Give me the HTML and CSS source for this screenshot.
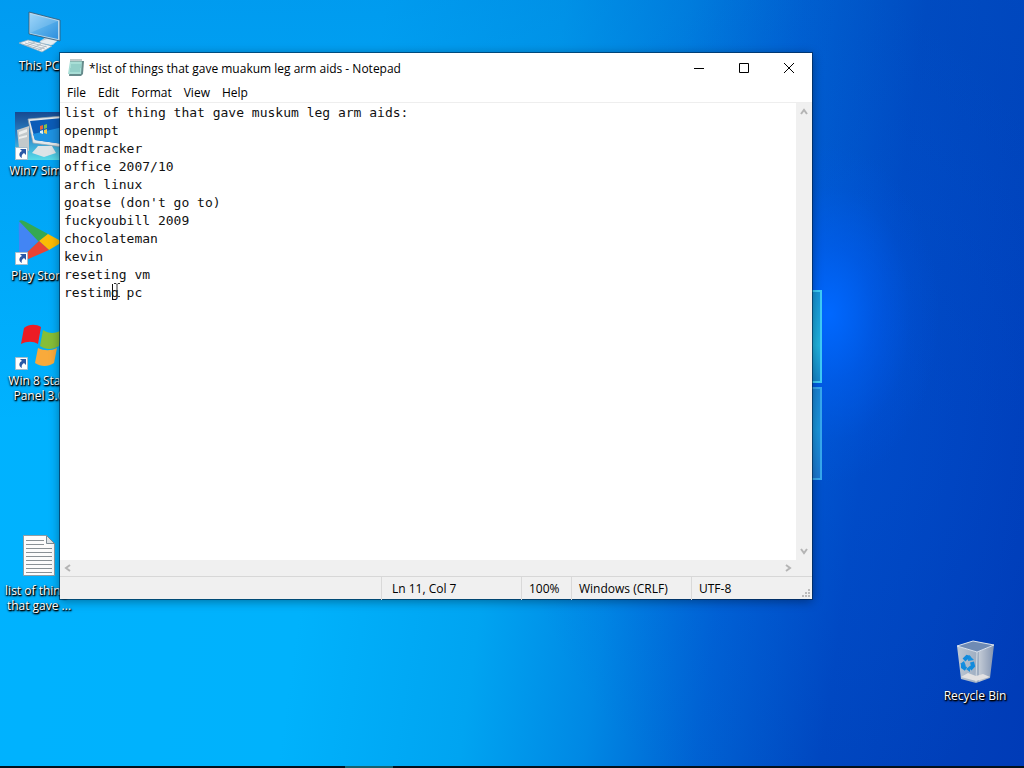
FILE: index.html
```html
<!DOCTYPE html>
<html lang="en">
<head>
<meta charset="utf-8">
<title>Desktop</title>
<link rel="stylesheet" href="styles.css">
</head>
<body>
<main class="desktop">
  <div class="logo-panes" aria-hidden="true"><span class="pane"></span><span class="pane pane-low"></span></div>

  <nav class="shortcuts" aria-label="Desktop icons">
    <a class="shortcut" href="#pc">
      <svg class="art" viewBox="0 0 48 48" aria-hidden="true">
        <defs><linearGradient id="screen" x1="0" y1="0" x2="1" y2="1"><stop offset="0" stop-color="#8ccdf8"/><stop offset=".5" stop-color="#56aeea"/><stop offset="1" stop-color="#2f8fdd"/></linearGradient></defs>
        <path d="M25 34l6-4 12 3-5 5-12-1z" fill="#b8cbd8"/><path d="M24 35l8-3 10 2-6 4z" fill="#e4edf2"/>
        <path d="M14 5l31 8v21l-31-7z" fill="#b8d8ee" stroke="#35556f" stroke-width=".8"/><path d="M15 7l28 7v18l-28-6z" fill="url(#screen)"/><path d="M15 7l28 7-28 12z" fill="#fff" opacity=".15"/>
        <path d="M4 36l9-3 24 6-10 6z" fill="#f1f4f6" stroke="#93a9b8" stroke-width=".7"/><path d="M7 37l20 6M10 36l20 6M13 35l19 5M12 39l8-4M18 41l8-4M23 43l8-4" stroke="#a5b4be" stroke-width=".8" fill="none"/>
      </svg>
      <span class="name">This PC</span>
    </a>
    <a class="shortcut" href="#win7">
      <svg class="art" viewBox="0 0 48 48" aria-hidden="true">
        <defs><linearGradient id="sky" x1="0" y1="0" x2="0" y2="1"><stop offset="0" stop-color="#164990"/><stop offset=".55" stop-color="#2f8dce"/><stop offset="1" stop-color="#58dbe8"/></linearGradient></defs>
        <path d="M0 0h48v48H0z" fill="url(#sky)"/>
        <path d="M2 18l12-4v25l-10-3z" fill="#c3c9cb"/><path d="M4 20l8-3v3l-8 3zm0 5l8-2v2l-8 2z" fill="#eceeee"/>
        <path d="M23 34h14l4 7-12 4-12-4z" fill="#dde4e7"/><path d="M13 7l35-3v31l-30-4z" fill="#e4e8ea" stroke="#97a5ae" stroke-width=".7"/><path d="M15 9l33-3v26l-28-4z" fill="#0b5cb8"/><path d="M18 22l30-7v17l-28-4z" fill="#1e92e2"/>
        <path d="M25 14l3-1v4l-3 1z" fill="#ea663e"/><path d="M29 13l3-1v4l-3 1z" fill="#7cc152"/><path d="M25 19l3-1v4l-3-1z" fill="#d8edf8"/><path d="M29 18l3-1v5l-3-1z" fill="#f3c84b"/>
        <g transform="translate(0 35)"><path d="M.5.5h12v12H.5z" fill="#fff" stroke="#a8bdcc"/><path d="M5 2h6v6L9 6c-2 1-3 3-2 5-4-2-3-6 0-7z" fill="#2b58a5"/></g>
      </svg>
      <span class="name">Win7 Simu</span>
    </a>
    <a class="shortcut" href="#play">
      <svg class="art" viewBox="0 0 48 48" aria-hidden="true">
        <path d="M5 5c-2 1-1 4-1 19s0 17 1 18l19-19z" fill="#4285f4"/><path d="M4 4c2-2 5 0 7 1l22 12-9 8z" fill="#34a853"/><path d="M33 17l11 6c2 1 2 3 0 4l-10 6-10-9z" fill="#fbbc04"/><path d="M24 24l10 9-23 10c-3 1-5 1-6-1z" fill="#ea4335"/>
        <g transform="translate(0 35)"><path d="M.5.5h12v12H.5z" fill="#fff" stroke="#a8bdcc"/><path d="M5 2h6v6L9 6c-2 1-3 3-2 5-4-2-3-6 0-7z" fill="#2b58a5"/></g>
      </svg>
      <span class="name">Play Store</span>
    </a>
    <a class="shortcut" href="#win8">
      <svg class="art" viewBox="0 0 48 48" aria-hidden="true">
        <path d="M9 6c5-4 12-4 17-1l-3 17c-5-3-11-3-17 0z" fill="#ed1c24"/><path d="M28 8c6 4 12 4 19 0l-3 16c-7 4-13 4-19 0z" fill="#86be38"/><path d="M23 26c6 3 13 3 19 0l-3 15c-6 4-13 4-19 0z" fill="#f9aa3b"/>
        <g transform="translate(0 35)"><path d="M.5.5h12v12H.5z" fill="#fff" stroke="#a8bdcc"/><path d="M5 2h6v6L9 6c-2 1-3 3-2 5-4-2-3-6 0-7z" fill="#2b58a5"/></g>
      </svg>
      <span class="name">Win 8 Start Panel 3.0</span>
    </a>
    <a class="shortcut document" href="#list">
      <svg class="art" viewBox="0 0 48 48" aria-hidden="true">
        <path d="M8.500 3.500h23l8 8v32h-31z" fill="#fcfcfc" stroke="#8f9da5"/><path d="M31.500 3.500v8h8z" fill="#dde3e7" stroke="#7f8b93"/><path d="M11 8.500h18M11 12.500h18M11 16.500h26M11 20.500h26M11 24.500h26M11 28.500h26M11 32.500h26M11 36.500h26M11 40.500h26" stroke="#8a9196"/>
      </svg>
      <span class="name">list of things that gave ...</span>
    </a>
  </nav>

  <nav class="shortcuts system" aria-label="System icons">
    <a class="shortcut bin" href="#bin">
      <svg class="art" viewBox="0 0 48 48" aria-hidden="true">
        <defs><linearGradient id="glass" x1="0" y1="0" x2="1" y2="0"><stop offset="0" stop-color="#bcc7d3"/><stop offset=".58" stop-color="#9cacc1"/><stop offset=".6" stop-color="#c2cad5"/><stop offset="1" stop-color="#8495b1"/></linearGradient></defs>
        <path d="M6 9l20 6 17-7-4 33-14 5-15-4z" fill="url(#glass)"/><path d="M6 9l16-5 21 4-17 7z" fill="#6f8bb4" stroke="#dde4ec"/><path d="M26 15l-1 30" stroke="#dee4ea" stroke-width=".8"/><path d="M10 40l15 4 14-4-7-3-7 2-8-3z" fill="#e2e1e2"/>
        <g fill="none" stroke="#118bdd" stroke-width="4"><path d="M13 23l3-3 3 1M21 25l1 4-3 3M15 32l-3-2v-3"/></g><path d="M18 18l5 5-6 1zM19 29v6l-4-3zM9 27l4-3 2 5z" fill="#168fe0"/>
      </svg>
      <span class="name">Recycle Bin</span>
    </a>
  </nav>

  <section class="window" aria-label="Notepad">
    <header class="titlebar">
      <svg class="app-icon" viewBox="0 0 16 18" aria-hidden="true"><path d="M3 2h13l-1 13-2 2H1z" fill="#668b8c"/><path d="M2 2h12l-1 13H0z" fill="#a8ded6"/><path d="M3 6h10M3 8h10M2 10h10M2 12h10" stroke="#73b9b4" stroke-width=".8"/><path d="M3 0v3M5 0v3M7 0v3M9 0v3M11 0v3M13 0v3" stroke="#617c7c" stroke-width=".8"/></svg>
      <h1 class="title">*list of things that gave muakum leg arm aids - Notepad</h1>
      <div class="controls">
        <button class="control" aria-label="Minimize"><svg viewBox="0 0 12 12"><path d="M1 6.500h10"/></svg></button>
        <button class="control" aria-label="Maximize"><svg viewBox="0 0 12 12"><path d="M1.500 1.500h9v9h-9z"/></svg></button>
        <button class="control" aria-label="Close"><svg viewBox="0 0 12 12"><path d="M1 1l10 10M11 1L1 11"/></svg></button>
      </div>
    </header>
    <div class="menus">
      <button class="menu">File</button><button class="menu">Edit</button><button class="menu">Format</button><button class="menu">View</button><button class="menu">Help</button>
    </div>
    <div class="editor">
      <textarea class="text" aria-label="Text editor" spellcheck="false" wrap="off">list of thing that gave muskum leg arm aids:
openmpt
madtracker
office 2007/10
arch linux
goatse (don't go to)
fuckyoubill 2009
chocolateman
kevin
reseting vm
restimg pc</textarea>
      <div class="bar vertical">
        <button class="arrow" aria-label="Scroll up"><svg viewBox="0 0 8 8"><path d="M1 6l3-4 3 4"/></svg></button>
        <button class="arrow" aria-label="Scroll down"><svg viewBox="0 0 8 8"><path d="M1 2l3 4 3-4"/></svg></button>
      </div>
      <div class="bar horizontal">
        <button class="arrow" aria-label="Scroll left"><svg viewBox="0 0 8 8"><path d="M6 1L2 4l4 3"/></svg></button>
        <button class="arrow" aria-label="Scroll right"><svg viewBox="0 0 8 8"><path d="M2 1l4 3-4 3"/></svg></button>
      </div>
      <svg class="pointer" viewBox="0 0 9 18" aria-hidden="true"><path d="M.500 1v16" stroke="#111"/><path d="M2 .5h2l1 1 1-1h2M5 1.500v11M2 13.500h2l1-1 1 1h2" stroke="#333" fill="none"/></svg>
    </div>
    <footer class="status">
      <span class="cell"></span><span class="cell position">Ln 11, Col 7</span><span class="cell">100%</span><span class="cell">Windows (CRLF)</span><span class="cell">UTF-8</span>
      <svg class="grip" viewBox="0 0 10 10" aria-hidden="true"><path d="M7 0h2v2H7zM4 3h2v2H4zM7 3h2v2H7zM1 6h2v2H1zM4 6h2v2H4zM7 6h2v2H7z" fill="#bcbcbc"/></svg>
    </footer>
  </section>
</main>
<div class="taskbar" aria-hidden="true"><span class="running"></span></div>
</body>
</html>
```

FILE: styles.css
```css
* { box-sizing: border-box; }

body {
  margin: 0;
  height: 100vh;
  display: flex;
  flex-direction: column;
  overflow: hidden;
  font: 12px/15px "Open Sans", "Noto Sans", sans-serif;
  color: #000;
}

button {
  margin: 0;
  padding: 0;
  border: 0;
  background: none;
  font: inherit;
  color: inherit;
}

svg { display: block; }

.desktop {
  position: relative;
  flex: 1;
  min-height: 0;
  display: flex;
  justify-content: space-between;
  padding-right: 10px;
  background:
    radial-gradient(ellipse 110px 170px at 81% 41%, #0068ff 0%, rgba(0, 98, 250, .5) 40%, rgba(0, 92, 235, .15) 75%, transparent 100%),
    radial-gradient(ellipse 300px 420px at 78% 52%, rgba(0, 88, 225, .4), transparent),
    linear-gradient(to bottom, rgba(0, 90, 200, .26), transparent 55%),
    linear-gradient(98deg, #00b2ff 0%, #00b2fc 34%, #00a4f1 50%, #0088e4 61%, #0062d2 71%, #0046be 82%, #003bb7 100%);
}

.logo-panes {
  position: absolute;
  left: 700px;
  top: 290px;
  width: 122px;
  height: 190px;
  display: grid;
  grid-template-rows: 1fr 1fr;
  gap: 4px;
}

.pane {
  border: 2px solid #3ecdf8;
  background: linear-gradient(#1795d8, #20b3df 60%, #1688cc);
}

.pane-low {
  border-color: #36a9ef;
  background: linear-gradient(#1b85d6, #1a96dc 45%, #1c78d2);
}

.shortcuts {
  display: grid;
  grid-template-columns: 78px;
  grid-template-rows: repeat(7, 105px);
}

.shortcut {
  display: flex;
  flex-direction: column;
  align-items: center;
  padding-top: 7px;
  color: #fff;
  text-align: center;
  text-decoration: none;
  text-shadow: 1px 1px 2px #000, 0 1px 2px #000, 1px 1px 1px #000;
}

.document { grid-row: 6; }
.bin { grid-row: 7; }

.art {
  width: 48px;
  height: 48px;
  margin-bottom: 3px;
}

.name { width: 70px; }

.window {
  position: absolute;
  top: 53px;
  left: 60px;
  right: 212px;
  bottom: 167px;
  display: flex;
  flex-direction: column;
  background: #fff;
  box-shadow: 0 0 0 1px rgba(0, 35, 70, .6), 0 2px 10px rgba(0, 0, 0, .4);
}

.titlebar {
  display: flex;
  align-items: center;
  height: 30px;
  padding: 0 1px 0 8px;
}

.app-icon {
  width: 16px;
  height: 18px;
  margin-right: 5px;
}

.title {
  flex: 1;
  margin: 0;
  font-size: 12px;
  font-weight: 400;
  white-space: nowrap;
}

.controls { display: flex; }

.control {
  display: grid;
  place-items: center;
  width: 45px;
  height: 28px;
}

.control svg {
  width: 12px;
  height: 12px;
  fill: none;
  stroke: #000;
}

.menus {
  display: flex;
  height: 19px;
  padding-left: 1px;
}

.menu { padding: 0 6px; }

.editor {
  position: relative;
  flex: 1;
  min-height: 0;
  display: grid;
  grid-template-columns: 1fr 16px;
  grid-template-rows: 1fr 16px;
  border-top: 1px solid #eee;
  background: #f0f0f0;
}

.text {
  padding: 1px 4px;
  border: 0;
  outline: 0;
  resize: none;
  overflow: hidden;
  background: #fff;
  color: #111;
  font: 13px/18px "DejaVu Sans Mono", monospace;
}

.bar {
  display: flex;
  justify-content: space-between;
}

.vertical { flex-direction: column; }

.arrow {
  display: grid;
  place-items: center;
  width: 16px;
  height: 18px;
}

.horizontal .arrow { height: 16px; }

.arrow svg {
  width: 8px;
  height: 8px;
  fill: none;
  stroke: #b4b4b4;
  stroke-width: 2;
}

.pointer {
  position: absolute;
  left: 52px;
  top: 180px;
  width: 9px;
  height: 18px;
}

.status {
  position: relative;
  display: grid;
  grid-template-columns: 1fr 140px 50px 120px 121px;
  height: 23px;
  border-top: 1px solid #d7d7d7;
  background: #f0f0f0;
  line-height: 23px;
}

.cell {
  padding-left: 7px;
  border-left: 1px solid #d9d9d9;
  white-space: nowrap;
}

.cell:first-child { border-left: 0; }
.position { padding-left: 10px; }

.grip {
  position: absolute;
  right: 1px;
  bottom: 0;
  width: 10px;
  height: 10px;
}

.taskbar {
  display: flex;
  height: 2px;
  padding-left: 345px;
  background: #02101c;
}

.running {
  width: 48px;
  background: #17616e;
}
```
